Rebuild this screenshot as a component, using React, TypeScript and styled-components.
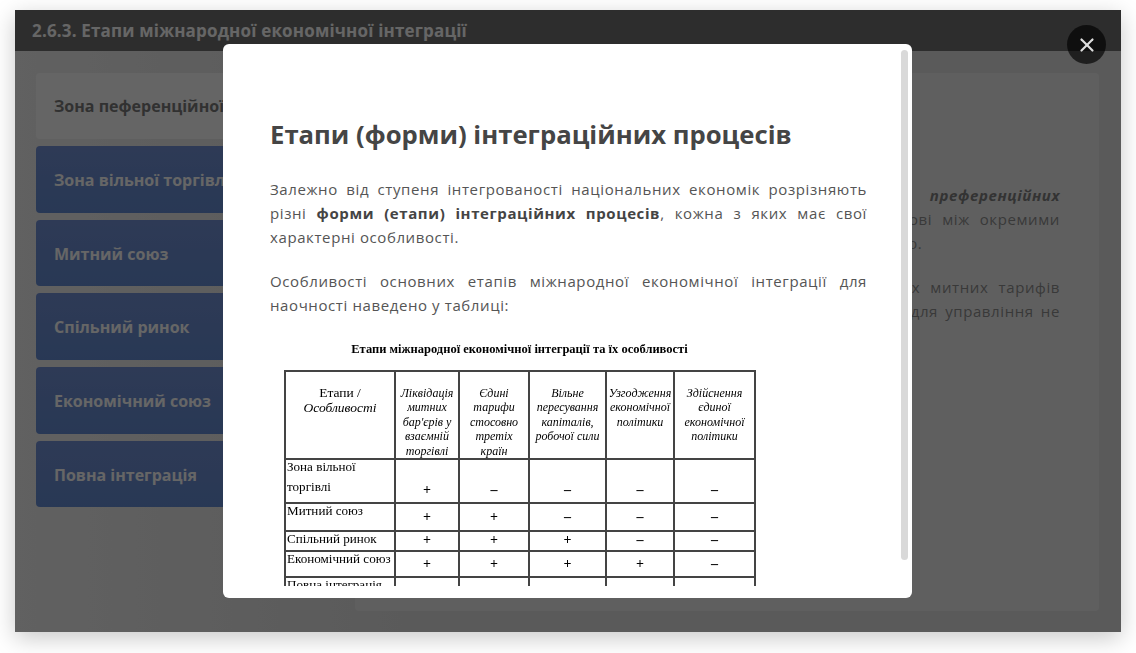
import React from 'react';
import styled, { createGlobalStyle } from 'styled-components';
import { X } from 'lucide-react';

const Global = createGlobalStyle`
  html, body { margin: 0; padding: 0; height: 653px; overflow: hidden; background: #fff; }
  body { font-family: "Open Sans", "Noto Sans", sans-serif; }
  * { box-sizing: border-box; }
`;

const Page = styled.div`
  width: 1136px;
  height: 653px;
  padding: 10px 15px 21px;
`;

const Frame = styled.div`
  position: relative;
  height: 622px;
  display: flex;
  flex-direction: column;
  background: linear-gradient(to right, #f2f2f2, #e2e2e2 35%, #e0e0e0);
  box-shadow: 0 6px 22px rgba(0, 0, 0, 0.22);
  overflow: hidden;
`;

const Header = styled.header`
  height: 41px;
  flex: none;
  display: flex;
  align-items: center;
  padding: 0 17px;
  background: #717171;
  color: #fff;
  font-size: 17px;
  letter-spacing: 0.17px;
  font-weight: 700;
`;

const Body = styled.div`
  flex: 1;
  min-height: 0;
  display: flex;
  gap: 16px;
  padding: 22px 22px 21px 21px;
`;

const Tabs = styled.nav`
  width: 303px;
  flex: none;
  display: flex;
  flex-direction: column;
  gap: 7px;
`;

const Tab = styled.div<{ $active?: boolean }>`
  height: ${p => (p.$active ? '66px' : '66.7px')};
  display: flex;
  align-items: center;
  padding: ${p => (p.$active ? '0' : '1px')} 0 0 18px;
  border-radius: 4px;
  font-size: 16px;
  font-weight: 700;
  white-space: nowrap;
  overflow: hidden;
  background: ${p => (p.$active ? '#fdfdfd' : 'linear-gradient(to bottom, #7492d6, #658dd4)')};
  color: ${p => (p.$active ? '#7c7c7c' : '#fff')};
`;

const Panel = styled.section`
  flex: 1;
  background: #eeeeee;
  border-radius: 4px;
  padding: 110px 39px 0;
  color: #909090;
  font-size: 15px;
  line-height: 24px;
  letter-spacing: 0.6px;
`;

const Para = styled.p`
  margin: 0 0 20px;
`;

const Line = styled.span<{ $last?: boolean }>`
  display: block;
  text-align: ${p => (p.$last ? 'left' : 'justify')};
  text-align-last: ${p => (p.$last ? 'left' : 'justify')};
  b { font-weight: 700; font-style: italic; color: #808080; }
`;

const Overlay = styled.div`
  position: absolute;
  inset: 0;
  padding-right: 1px;
  display: flex;
  align-items: center;
  justify-content: center;
  background: rgba(0, 0, 0, 0.6);
`;

const Close = styled.button`
  position: absolute;
  top: 15px;
  right: 15px;
  width: 39px;
  height: 39px;
  padding: 0;
  border: 0;
  border-radius: 50%;
  display: flex;
  align-items: center;
  justify-content: center;
  background: rgba(0, 0, 0, 0.65);
  color: #dedede;
`;

const Modal = styled.div`
  position: relative;
  width: 689px;
  height: 554px;
  padding: 0 45px 12px 47px;
  border-radius: 6px;
  background: #fff;
  display: flex;
`;

const Scroll = styled.div`
  flex: 1;
  overflow: hidden;
  padding-top: 75px;
`;

const ScrollThumb = styled.div`
  position: absolute;
  top: 6px;
  right: 4px;
  width: 7px;
  height: 510px;
  border-radius: 4px;
  background: #d9d9d9;
`;

const Title = styled.h2`
  margin: 0 0 26px;
  font-size: 25.7px;
  line-height: 32px;
  font-weight: 700;
  color: #454545;
`;

const Text = styled.p`
  margin: 0 0 20px;
  font-size: 15px;
  line-height: 24px;
  letter-spacing: 0.6px;
  color: #555;
  text-align: justify;
  b { font-weight: 700; color: #444; }
`;

const Figure = styled.figure`
  margin: 25px 0 0 14px;
  font-family: "Liberation Serif", serif;
  color: #000;
  filter: blur(0.35px);
`;

const Caption = styled.figcaption`
  width: 471px;
  margin-bottom: 14px;
  text-align: center;
  font-size: 12.5px;
  line-height: 14px;
  font-weight: 700;
`;

const Table = styled.table`
  width: 471px;
  table-layout: fixed;
  border-collapse: collapse;
`;

const Th = styled.th<{ $w: number }>`
  width: ${p => p.$w}px;
  height: 88px;
  padding: 14px 0 0;
  border: 2px solid #444;
  vertical-align: top;
  text-align: center;
  font-style: italic;
  font-weight: 400;
  font-size: 12px;
  line-height: 14.4px;
  white-space: nowrap;
`;

const StageHead = styled.span`
  display: block;
  margin-top: -1px;
  font-size: 13.5px;
  line-height: 15px;
`;

const Upright = styled.span`
  font-style: normal;
`;

const Tr = styled.tr<{ $h: number }>`
  height: ${p => p.$h}px;
`;

const Name = styled.td`
  padding: 0 0 0 1px;
  border: 2px solid #444;
  vertical-align: top;
  font-size: 13.1px;
  line-height: 20px;
  white-space: nowrap;
  overflow: hidden;
`;

const NameText = styled.div`
  &:first-child { margin-top: -3px; }
`;

const Mark = styled.td<{ $pos?: 'bottom' | 'top' }>`
  padding: 0 0 ${p => (p.$pos === 'bottom' ? '4px' : '1px')};
  border: 2px solid #444;
  text-align: center;
  vertical-align: ${p => p.$pos || 'middle'};
  font-size: 14px;
  line-height: 16px;
  font-weight: 700;
`;

const heads = [
  { w: 64, t: ['Ліквідація', 'митних', "бар'єрів у", 'взаємній', 'торгівлі'] },
  { w: 70, t: ['Єдині', 'тарифи', 'стосовно', 'третіх', 'країн'] },
  { w: 77, t: ['Вільне', 'пересування', 'капіталів,', 'робочої сили'] },
  { w: 68, t: ['Узгодження', 'економічної', 'політики'] },
  { w: 81, t: ['Здійснення', 'єдиної', 'економічної', 'політики'] },
];

const rows = [
  { h: 44, name: ['Зона вільної', 'торгівлі'], marks: '+----', pos: 'bottom' as const },
  { h: 28, name: ['Митний союз'], marks: '++---' },
  { h: 20, name: ['Спільний ринок'], marks: '+++--', pos: 'top' as const },
  { h: 26, name: ['Економічний союз'], marks: '++++-' },
  { h: 26, name: ['Повна інтеграція'], marks: '+++++' },
];

const tabs = ['Зона вільної торгівлі', 'Митний союз', 'Спільний ринок', 'Економічний союз', 'Повна інтеграція'];

export default function App() {
  return (
    <Page>
      <Global />
      <Frame>
        <Header>2.6.3. Етапи міжнародної економічної інтеграції</Header>
        <Body>
          <Tabs>
            <Tab $active>Зона пеференційної торгівлі</Tab>
            {tabs.map(t => <Tab key={t}>{t}</Tab>)}
          </Tabs>
          <Panel>
            <Para>
              <Line>Найпростіша форма інтеграції — це укладення <b>преференційних</b></Line>
              <Line>торговельних договорів про пільгові умови на взаємній основі між окремими</Line>
              <Line $last>країнами або їх групами, які хочуть поглибити взаємну співпрацю.</Line>
            </Para>
            <Para>
              <Line>Це передбачає лише поступове зниження рівня національних митних тарифів</Line>
              <Line>на окремі групи товарів, причому створення спільних органів для управління не</Line>
              <Line $last>передбачається.</Line>
            </Para>
          </Panel>
        </Body>
        <Overlay>
          <Modal>
            <Scroll>
              <Title>Етапи (форми) інтеграційних процесів</Title>
              <Text>
                Залежно від ступеня інтегрованості національних економік розрізняють різні <b>форми (етапи) інтеграційних процесів</b>, кожна з яких має свої характерні особливості.
              </Text>
              <Text>
                Особливості основних етапів міжнародної економічної інтеграції для наочності наведено у таблиці:
              </Text>
              <Figure>
                <Caption>Етапи міжнародної економічної інтеграції та їх особливості</Caption>
                <Table>
                  <thead>
                    <tr>
                      <Th $w={110}>
                        <StageHead><Upright>Етапи /</Upright><br />Особливості</StageHead>
                      </Th>
                      {heads.map(h => (
                        <Th key={h.w} $w={h.w}>
                          {h.t.map(l => <div key={l}>{l}</div>)}
                        </Th>
                      ))}
                    </tr>
                  </thead>
                  <tbody>
                    {rows.map(r => (
                      <Tr key={r.name[0]} $h={r.h}>
                        <Name>{r.name.map(n => <NameText key={n}>{n}</NameText>)}</Name>
                        {r.marks.split('').map((m, i) => (
                          <Mark key={i} $pos={r.pos}>{m === '+' ? '+' : '–'}</Mark>
                        ))}
                      </Tr>
                    ))}
                  </tbody>
                </Table>
              </Figure>
            </Scroll>
            <ScrollThumb />
          </Modal>
          <Close aria-label="Закрити"><X size={22} strokeWidth={2.4} /></Close>
        </Overlay>
      </Frame>
    </Page>
  );
}
